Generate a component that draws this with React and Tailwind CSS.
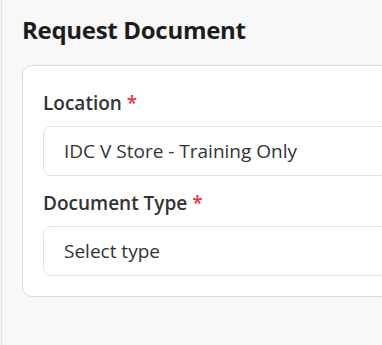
export default function App() {
  const font = { fontFamily: '"Open Sans", "Noto Sans", sans-serif' };
  return (
    <div className="w-[382px] h-[345px] overflow-hidden bg-[#f8f8f8]" style={font}>
      <div className="ml-px h-full border-l border-[#e2e2e2] pl-[20px] pt-[14px]">
        <h1 className="text-[24px] leading-[32px] font-bold text-[#1c1c1c] tracking-[-0.3px]">Request Document</h1>
        <div className="mt-[19px] w-[420px] rounded-[10px] border border-[#dcdcdc] bg-white px-5 pt-[23px] pb-5">
          <label className="block text-[19px] leading-[28px] font-semibold text-[#333]">
            Location <span className="text-[#dc3545]">*</span>
          </label>
          <div className="mt-[9px] h-[50px] rounded-[8px] border border-[#e3e3e3] bg-white pl-5 flex items-center text-[19px] text-[#333]">
            IDC V Store - Training Only
          </div>
          <label className="mt-[13px] block text-[19px] leading-[28px] font-semibold text-[#333]">
            Document Type <span className="text-[#dc3545]">*</span>
          </label>
          <div className="mt-[9px] h-[50px] rounded-[8px] border border-[#e3e3e3] bg-white pl-5 flex items-center text-[19px] text-[#333]">
            Select type
          </div>
        </div>
      </div>
    </div>
  );
}
